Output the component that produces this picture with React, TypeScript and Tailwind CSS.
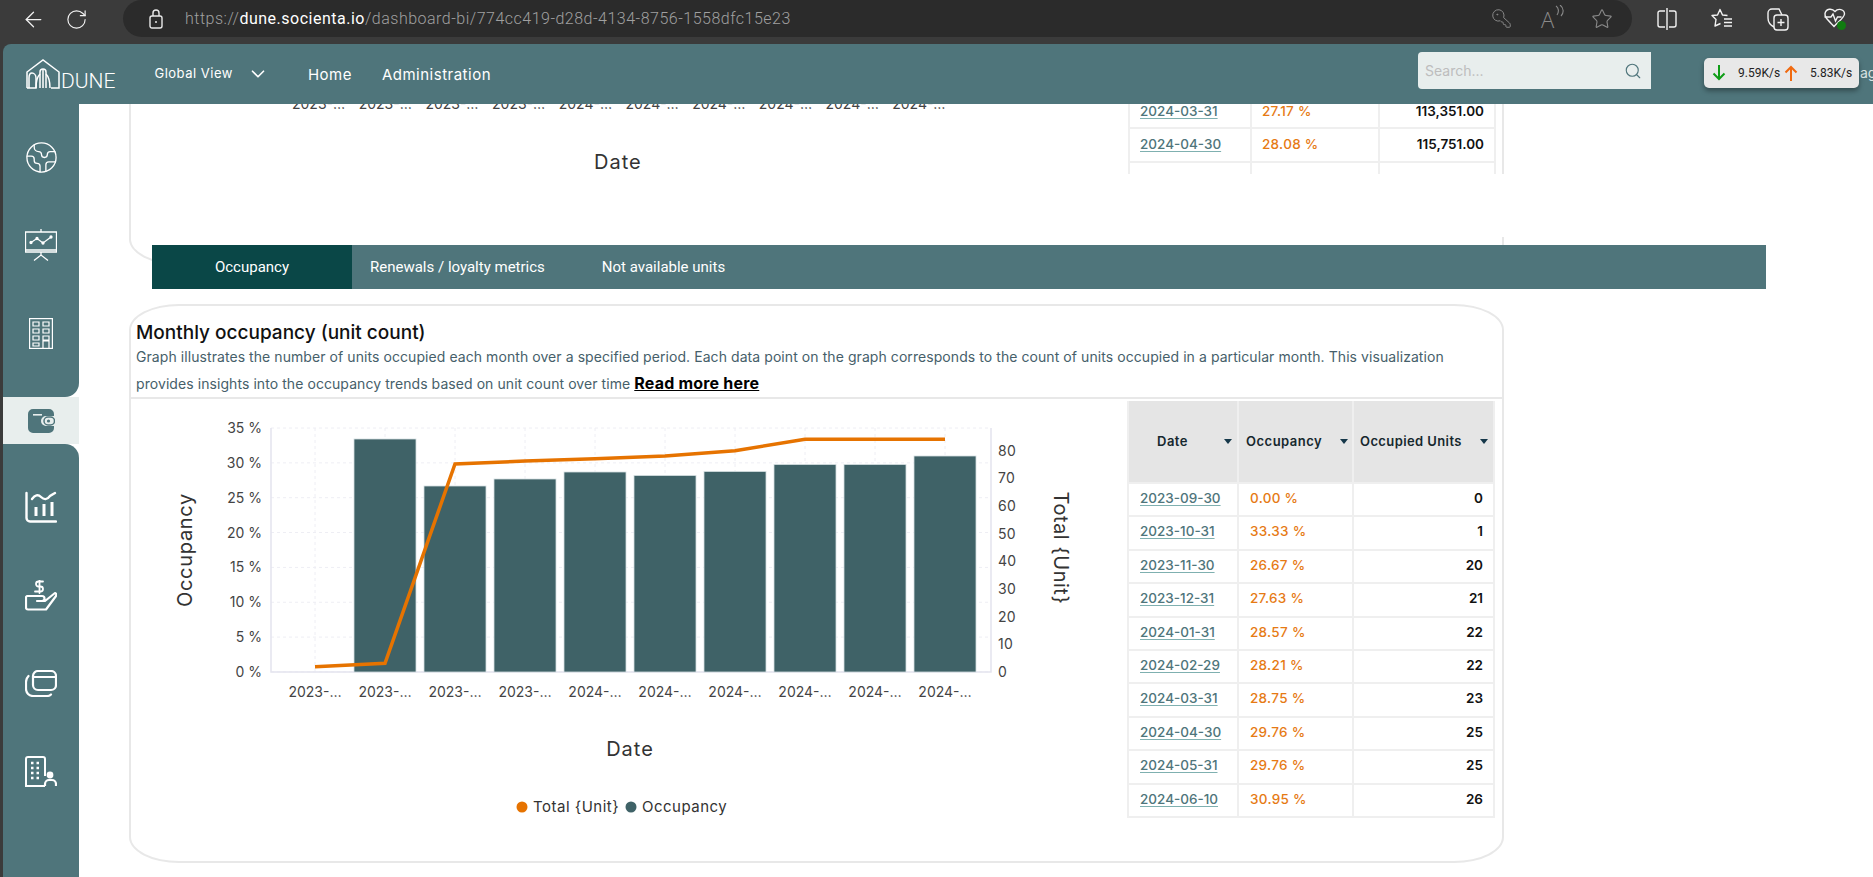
import {
  ArrowLeft,
  ChevronDown,
  Earth,
  KeyRound,
  RotateCw,
  Search,
  Star,
} from "lucide-react";

const navLinks = ["Home", "Administration"];

const tabs = ["Occupancy", "Renewals / loyalty metrics", "Not available units"];

const rows = [
  ["2023-09-30", "0.00 %", "0"],
  ["2023-10-31", "33.33 %", "1"],
  ["2023-11-30", "26.67 %", "20"],
  ["2023-12-31", "27.63 %", "21"],
  ["2024-01-31", "28.57 %", "22"],
  ["2024-02-29", "28.21 %", "22"],
  ["2024-03-31", "28.75 %", "23"],
  ["2024-04-30", "29.76 %", "25"],
  ["2024-05-31", "29.76 %", "25"],
  ["2024-06-10", "30.95 %", "26"],
];

const topRows = [
  ["2024-03-31", "27.17 %", "113,351.00"],
  ["2024-04-30", "28.08 %", "115,751.00"],
  ["", "", ""],
];

const topLabels = ["2023-…", "2023-…", "2023-…", "2023-…", "2024-…", "2024-…", "2024-…", "2024-…", "2024-…", "2024-…"];

const barTops = [0, 439, 486, 479, 472, 475.5, 471.5, 464.5, 464.5, 456];
const lineY = [666.7, 663.3, 464, 461, 458.7, 456, 450.7, 439.3, 439.3, 439.3];
const leftTicks = ["35 %", "30 %", "25 %", "20 %", "15 %", "10 %", "5 %", "0 %"];
const rightTicks = ["80", "70", "60", "50", "40", "30", "20", "10", "0"];

const cx = (i: number) => 315 + i * 70;

const Logo = () => (
  <svg width="34" height="30" viewBox="0 0 34 30" fill="none" stroke="#fff" strokeWidth="1.5">
    <path d="M1 29V13L17 1l16 12v16h-8" />
    <path d="M1 29h9V19c0-3-2-5-4-5s-3 2-3 5v10" />
    <path d="M14 29V13c0-2 1-3 3-3s3 1 3 3v16" />
    <path d="M10 29c0-8 2-12 4-14M24 29c0-8-2-12-4-14M17 10v19" />
  </svg>
);

const Presentation = () => (
  <svg width="32" height="32" viewBox="0 0 32 32" fill="none" stroke="#fff" strokeWidth="1.3">
    <path d="M16 0v3M0.5 3h31v20h-31zM0.5 21h31M16 23v3M9 31.5l7-5.5 7 5.5" />
    <path d="M6 13.5l6-4 6 4.5 8-6" strokeWidth="1.2" />
    <circle cx="6" cy="13.5" r="1" fill="#fff" />
    <circle cx="12" cy="9.5" r="1" fill="#fff" />
    <circle cx="18" cy="14" r="1" fill="#fff" />
    <circle cx="26" cy="8" r="1" fill="#fff" />
  </svg>
);

const Building = () => (
  <svg width="24" height="31" viewBox="0 0 24 31" fill="none" stroke="#fff" strokeWidth="1.2">
    <rect x="0.6" y="0.6" width="22.8" height="29.8" />
    <path d="M4 4h6v4H4zM14 4h6v4h-6zM4 11h6v4H4zM14 11h6v4h-6zM4 18h6v4H4zM14 18h6v4h-6zM4 25h6v3H4zM14 30v-7h6v7" />
  </svg>
);

const Wallet = () => (
  <svg width="28" height="24" viewBox="0 0 28 24">
    <path d="M6 0h16a5 5 0 0 1 5 5v2H19a5 5 0 0 0 0 10h8v2a5 5 0 0 1-5 5H6a5 5 0 0 1-5-5V5a5 5 0 0 1 5-5z" fill="#4f757b" />
    <rect x="6" y="5" width="9" height="1.6" fill="#e8eeed" />
    <rect x="17" y="8" width="10.5" height="8" rx="4" fill="#e8eeed" stroke="#4f757b" strokeWidth="1.5" />
    <circle cx="21.5" cy="12" r="1.6" fill="#4f757b" />
  </svg>
);

const ChartIcon = () => (
  <svg width="32" height="32" viewBox="0 0 32 32" fill="none" stroke="#fff" strokeWidth="2.4" strokeLinecap="round">
    <path d="M1.5 2v25a3.5 3.5 0 0 0 3.5 3.5h26" />
    <path d="M7 8c3-4 6-5 9-2s6 3 9-1l5-3" />
    <path d="M11 16v9M19 13v12M27 11v14" strokeWidth="3" strokeLinecap="butt" />
  </svg>
);

const HandIcon = () => (
  <svg width="32" height="31" viewBox="0 0 32 31" fill="none" stroke="#fff" strokeWidth="2.2" strokeLinecap="round" strokeLinejoin="round">
    <path d="M18 1.5h-4.5a2.5 2.5 0 0 0 0 5h2a2.5 2.5 0 0 1 0 5H10M14.5 0v13" strokeWidth="1.8" />
    <path d="M2 16h15a2.5 2.5 0 0 1 0 5h-5l8 0 10-8a2 2 0 0 1 1 3L21 29.5H3a2 2 0 0 1-2-2V17z" />
  </svg>
);

const CardsIcon = () => (
  <svg width="32" height="27" viewBox="0 0 32 27" fill="none" stroke="#fff" strokeWidth="2.2" strokeLinecap="round">
    <rect x="8" y="1" width="23" height="19" rx="5" />
    <path d="M8 7h23" />
    <path d="M3.5 6A9 9 0 0 0 1 12v7a7 7 0 0 0 7 7h14c2 0 3-.5 4-1.5" />
  </svg>
);

const TenantIcon = () => (
  <svg width="32" height="31" viewBox="0 0 32 31" fill="none" stroke="#fff" strokeWidth="2">
    <path d="M20 30H1V3a2 2 0 0 1 2-2h15a2 2 0 0 1 2 2v17" />
    <path d="M6 7h2.5M11.5 7H14M6 12h2.5M11.5 12H14M6 17h2.5M11.5 17H14M6 22h2.5M11.5 22H14" strokeWidth="2.4" />
    <circle cx="25" cy="19" r="3.4" fill="#fff" stroke="none" />
    <path d="M20 30v-2a4 4 0 0 1 4-4h3a4 4 0 0 1 4 4v2" strokeWidth="2.2" />
  </svg>
);

const SplitIcon = () => (
  <svg width="20" height="22" viewBox="0 0 20 22" fill="none" stroke="#f2f2f2" strokeWidth="1.4">
    <path d="M8 3H3a2 2 0 0 0-2 2v12a2 2 0 0 0 2 2h5M12 3h5a2 2 0 0 1 2 2v12a2 2 0 0 1-2 2h-5M10 0v22" />
  </svg>
);

const FavoritesIcon = () => (
  <svg width="22" height="22" viewBox="0 0 22 22" fill="none" stroke="#f2f2f2" strokeWidth="1.4" strokeLinejoin="round">
    <path d="M16.5 7.5L11.5 7 9 1.500 6.500 7 1 7.500l4 4-1 6.500 5.500-2.500" />
    <path d="M13 11h8M13 14.500h8M13 18h8" />
  </svg>
);

const CollectionsIcon = () => (
  <svg width="22" height="24" viewBox="0 0 22 24" fill="none" stroke="#f2f2f2" strokeWidth="1.4">
    <rect x="7" y="8" width="14" height="15" rx="3" />
    <path d="M14 12v7M10.5 15.5h7M7 20C3 18 1 15 1 11V6a4 4 0 0 1 4-4h7l3 6" />
  </svg>
);

const HealthIcon = () => (
  <svg width="24" height="24" viewBox="0 0 24 24" fill="none" stroke="#f2f2f2" strokeWidth="1.4">
    <path d="M12 4.500C9 1 3 1.500 2 6.500 1.500 10 4 12 11 19.500 16 14 21 11 21.500 7 21.500 2 15 1 12 4.500z" />
    <path d="M1.500 10H8l2-3 2.500 7 2-4h4" />
    <circle cx="18.500" cy="18.500" r="4.500" fill="#107c10" stroke="none" />
  </svg>
);

const LockIcon = () => (
  <svg width="14" height="20" viewBox="0 0 14 20" fill="none" stroke="#e8e8e8" strokeWidth="1.4">
    <rect x="1" y="7" width="12" height="12" rx="2" />
    <path d="M4 7V4a3 3 0 0 1 6 0v3" />
    <circle cx="7" cy="13" r="1" fill="#e8e8e8" stroke="none" />
  </svg>
);

const ReadAloud = () => (
  <div className="relative flex w-[24px] items-center text-[22px] font-light leading-none text-[#8a8a8a] font-['Open_Sans',sans-serif]">
    A
    <svg className="absolute left-[14px] top-[-3px]" width="10" height="12" viewBox="0 0 10 12" fill="none" stroke="#8a8a8a" strokeWidth="1.1">
      <path d="M1 1c3 2 3 6 1 9M5 0c4 3 4 8 1 11" />
    </svg>
  </div>
);

const Caret = () => (
  <span className="ml-auto h-0 w-0 shrink-0 border-x-[4px] border-t-[5px] border-x-transparent border-t-[#16384a]" />
);

const BrowserBar = () => (
  <div className="flex h-[44px] items-start bg-[#3b3b3b]">
    <div className="flex h-[38px] w-[123px] items-center pl-[21px]">
      <ArrowLeft size={25} strokeWidth={1.2} color="#f2f2f2" />
      <RotateCw size={23} strokeWidth={1.2} color="#f2f2f2" className="ml-[19px]" />
    </div>
    <div className="flex h-[37px] w-[1509px] items-center rounded-full bg-[#2b2b2b] pl-[26px]">
      <LockIcon />
      <div className="ml-[22px] whitespace-nowrap text-[16px] tracking-[0.5px] font-['Roboto',sans-serif] font-light text-[#a0a0a0]">
        https://<span className="font-normal text-white">dune.socienta.io</span>/dashboard-bi/774cc419-d28d-4134-8756-1558dfc15e23
      </div>
      <div className="ml-auto mr-[19px] flex items-center">
        <KeyRound size={21} strokeWidth={1.1} color="#8a8a8a" className="-scale-x-100" />
        <div className="ml-[29px]">
          <ReadAloud />
        </div>
        <Star size={22} strokeWidth={1.2} color="#8a8a8a" className="ml-[26px]" />
      </div>
    </div>
    <div className="flex h-[38px] items-center gap-[34px] pl-[25px]">
      <SplitIcon />
      <FavoritesIcon />
      <CollectionsIcon />
      <HealthIcon />
    </div>
  </div>
);

const AppHeader = () => (
  <div className="ml-[3px] flex h-[60px] items-center rounded-tl-[8px] bg-[#4f757b] text-white">
    <div className="ml-[23px] flex items-end">
      <Logo />
      <span className="ml-[1px] text-[21px] font-light leading-[16px] font-['Roboto',sans-serif]">DUNE</span>
    </div>
    <span className="ml-[39px] text-[13px] tracking-[0.5px]">Global View</span>
    <ChevronDown size={22} strokeWidth={1.8} className="ml-[14px]" />
    <div className="ml-[39px] flex gap-[30px] pt-[3px] text-[15px] tracking-[0.5px]">
      {navLinks.map((link) => (
        <span key={link}>{link}</span>
      ))}
    </div>
    <div className="ml-auto mr-[222px] -mt-[7px] flex h-[37px] w-[233px] items-center rounded-l-[4px] bg-[#e8eeed] pl-[7px] pr-[9px]">
      <span className="text-[14px] text-[#bdbdbd]">Search...</span>
      <Search size={18} strokeWidth={1.5} color="#4f757b" className="ml-auto" />
    </div>
  </div>
);

const Sidebar = () => (
  <div className="flex w-[76px] shrink-0 flex-col bg-white">
    <div className="h-[293px] rounded-br-[14px] bg-[#4f757b] pt-[9px]">
      <div className="flex h-[88px] items-center justify-center">
        <Earth size={35} strokeWidth={0.9} color="#fff" />
      </div>
      <div className="flex h-[88px] items-center justify-center">
        <Presentation />
      </div>
      <div className="flex h-[88px] items-center justify-center">
        <Building />
      </div>
    </div>
    <div className="flex h-[47px] items-center justify-center bg-[#e8eeed]">
      <Wallet />
    </div>
    <div className="flex-1 rounded-tr-[14px] bg-[#4f757b] pt-[19px]">
      <div className="flex h-[88px] items-center justify-center">
        <ChartIcon />
      </div>
      <div className="flex h-[88px] items-center justify-center">
        <HandIcon />
      </div>
      <div className="flex h-[88px] items-center justify-center">
        <CardsIcon />
      </div>
      <div className="flex h-[88px] items-center justify-center">
        <TenantIcon />
      </div>
    </div>
  </div>
);

const TopCard = () => (
  <div className="relative -mt-[60px] ml-[50px] flex h-[221px] w-[1375px] rounded-bl-[50px_26px] border-x-2 border-b-2 border-[#e8e8e8]">
    <div className="w-[997px]">
      <div className="ml-[161px] mt-[52px] flex text-[14px] leading-[16px] text-[#444]">
        {topLabels.map((label, i) => (
          <span key={i} className="w-[66.700px] shrink-0">
            {label}
          </span>
        ))}
      </div>
      <div className="ml-[463px] mt-[37px] text-[20px] leading-[26px] tracking-[1px] text-[#333]">Date</div>
    </div>
    <div className="h-[130px] w-[368px] overflow-hidden pt-[52px]">
      {topRows.map((row, i) => (
        <div key={i} className="grid h-[33.400px] grid-cols-[122px_128px_116px] border-x-2 border-b-2 border-[#efefef] text-[13.500px] font-medium leading-[31px]">
          <div className="border-r-2 border-[#efefef] pl-[10px] text-[#4f757b] underline decoration-[#7fb0b0] underline-offset-2">{row[0]}</div>
          <div className="border-r-2 border-[#efefef] pl-[10px] tracking-[0.3px] text-[#e67a14]">{row[1]}</div>
          <div className="pr-[12px] text-right font-semibold text-[#111]">{row[2]}</div>
        </div>
      ))}
    </div>
    <div className="absolute -right-[2px] top-[130px] h-[63px] w-[8px] bg-white" />
  </div>
);

const TabBar = () => (
  <div className="relative -mt-[20px] ml-[73px] flex h-[44px] w-[1614px] items-center bg-[#4f757b] text-[15px] text-white font-['Roboto',sans-serif]">
    <div className="flex h-full w-[200px] items-center justify-center bg-[#0a4747]">{tabs[0]}</div>
    <span className="ml-[18px]">{tabs[1]}</span>
    <span className="ml-[57px]">{tabs[2]}</span>
  </div>
);

const Chart = () => (
  <svg width="996" height="455" viewBox="131 399 996 455" className="shrink-0 font-['Inter',sans-serif]">
    {leftTicks.map((_, i) => (
      <line key={i} x1="271" x2="991" y1={428 + i * 34.85} y2={428 + i * 34.85} stroke="#eeeef4" strokeDasharray="3 3" />
    ))}
    {barTops.map((_, i) => (
      <line key={i} x1={cx(i)} x2={cx(i)} y1="428" y2="672" stroke="#eeeef4" strokeDasharray="3 3" />
    ))}
    <path d="M271 428V672H991V428" fill="none" stroke="#e4e4ee" strokeWidth="1.500" />
    {barTops.map((top, i) =>
      top ? (
        <rect key={i} x={cx(i) - 31} y={top} width="62" height={672 - top} fill="#3f6267" stroke="#d5dfe2" strokeWidth="0.800" />
      ) : null,
    )}
    <polyline
      points={lineY.map((y, i) => `${cx(i)},${y}`).join(" ")}
      fill="none"
      stroke="#e67300"
      strokeWidth="3.500"
    />
    {leftTicks.map((t, i) => (
      <text key={t} x="262" y={428 + i * 34.85 + 5} textAnchor="end" fontSize="14" fill="#444">
        {t}
      </text>
    ))}
    {rightTicks.map((t, i) => (
      <text key={t} x="998" y={450.7 + i * 27.65 + 5} fontSize="14" letterSpacing="0.3" fill="#444">
        {t}
      </text>
    ))}
    {barTops.map((_, i) => (
      <text key={i} x={cx(i)} y="697" textAnchor="middle" fontSize="14" fill="#444">
        {i < 4 ? "2023-…" : "2024-…"}
      </text>
    ))}
    <text transform="translate(192 550) rotate(-90)" textAnchor="middle" fontSize="20" letterSpacing="0.7" fill="#333">
      Occupancy
    </text>
    <text transform="translate(1054 548) rotate(90)" textAnchor="middle" fontSize="20" letterSpacing="0.5" fill="#333">
      {"Total {Unit}"}
    </text>
    <text x="630" y="756" textAnchor="middle" fontSize="20" letterSpacing="1" fill="#333">
      Date
    </text>
    <circle cx="522" cy="807" r="5.500" fill="#e67300" />
    <text x="533" y="812" fontSize="15" letterSpacing="0.5" fill="#333">
      {"Total {Unit}"}
    </text>
    <circle cx="631" cy="807" r="5.500" fill="#3f6267" />
    <text x="642" y="812" fontSize="15" letterSpacing="0.5" fill="#333">
      Occupancy
    </text>
  </svg>
);

const UnitsTable = () => (
  <div className="mt-[2px] h-fit w-[368px] border-x-2 border-b-2 border-[#efefef] text-[13.500px]">
    <div className="grid h-[81px] grid-cols-[110px_115px_139px] items-center bg-[#e5e5e5] text-[13px] font-semibold tracking-[0.5px] text-[#16282e]">
      <div className="flex h-full items-center border-r-2 border-[#efefef] pl-[28px] pr-[5px]">
        Date
        <Caret />
      </div>
      <div className="flex h-full items-center border-r-2 border-[#efefef] pl-[7px] pr-[4px]">
        Occupancy
        <Caret />
      </div>
      <div className="flex h-full items-center whitespace-nowrap pl-[6px] pr-[5px] tracking-[0.4px]">
        Occupied Units
        <Caret />
      </div>
    </div>
    {rows.map((row) => (
      <div key={row[0]} className="grid h-[33.400px] grid-cols-[110px_115px_139px] border-t-2 border-[#efefef] font-medium leading-[29px]">
        <div className="border-r-2 border-[#efefef] pl-[11px] text-[#4f757b] underline decoration-[#7fb0b0] underline-offset-2">{row[0]}</div>
        <div className="border-r-2 border-[#efefef] pl-[11px] tracking-[0.3px] text-[#e67a14]">{row[1]}</div>
        <div className="pr-[10px] text-right font-semibold text-[#111]">{row[2]}</div>
      </div>
    ))}
  </div>
);

const OccupancyCard = () => (
  <div className="ml-[50px] mt-[15px] h-[559px] w-[1375px] rounded-[50px/26px] border-2 border-[#e8e8e8]">
    <div className="border-b-2 border-[#e8e8e8] pl-[5px] pt-[15px]">
      <h2 className="text-[19px] font-medium leading-[24px] text-[#111]">Monthly occupancy (unit count)</h2>
      <p className="-mt-px text-[14px] leading-[26px] tracking-[0.07px] text-[#46606a]">
        Graph illustrates the number of units occupied each month over a specified period. Each data point on the graph corresponds to the count of units occupied in a particular month. This visualization
        <br />
        provides insights into the occupancy trends based on unit count over time{" "}
        <a className="text-[16px] font-bold tracking-[0.2px] text-black underline">Read more here</a>
      </p>
    </div>
    <div className="flex">
      <Chart />
      <UnitsTable />
    </div>
  </div>
);

export default function App() {
  return (
    <div className="relative h-[877px] w-[1873px] overflow-hidden bg-[#3b3b3b] font-['Inter',sans-serif]">
      <BrowserBar />
      <AppHeader />
      <div className="ml-[3px] flex h-[773px]">
        <Sidebar />
        <main className="flex-1 overflow-hidden bg-white">
          <TopCard />
          <TabBar />
          <OccupancyCard />
        </main>
      </div>
      <div className="absolute left-[1860px] top-[62px] text-[14px] text-[#d9e4e4]">ag</div>
      <div className="absolute left-[1704px] top-[58px] flex h-[30px] w-[155px] items-center rounded-[5px] bg-[#e8e8e8] pl-[8px] text-[12px] text-[#222] shadow-[0_3px_5px_rgba(0,0,0,0.35)] font-['Roboto',sans-serif]">
        <svg width="14" height="16" viewBox="0 0 14 16" fill="none" stroke="#0f9d17" strokeWidth="2">
          <path d="M7 0v14M1.500 8.500L7 14l5.500-5.500" />
        </svg>
        <span className="ml-[12px] w-[46px]">9.59K/s</span>
        <svg width="14" height="16" viewBox="0 0 14 16" fill="none" stroke="#f06a10" strokeWidth="2">
          <path d="M7 16V2M1.500 7.500L7 2l5.500 5.500" />
        </svg>
        <span className="ml-[12px]">5.83K/s</span>
      </div>
    </div>
  );
}
